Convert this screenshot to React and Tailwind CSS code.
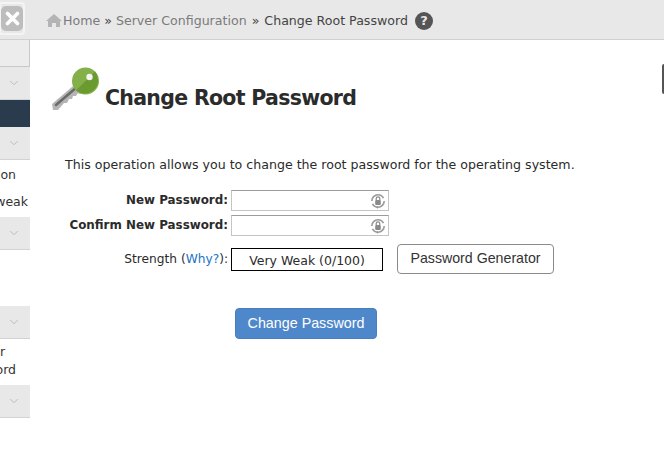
import { ChevronDown } from "lucide-react";

const font = "font-['DejaVu_Sans',sans-serif]";

const GrayRow = ({ className = "" }) => (
  <div className={`h-[33px] bg-[#e8e8e8] border-b border-[#d2d2d2] flex items-center justify-end pr-[9px] ${className}`}>
    <ChevronDown size={14} strokeWidth={1.5} className="text-[#b4b4b4]" />
  </div>
);

const KeyIcon = () => (
  <svg width="48" height="45" viewBox="0 0 48 45">
    <path d="M1 37 L28 14 L35 22 L29 27 L27 26 L25 29 L22 29 L21 32 L18 32 L16 36 L13 36 L7 43 L2 43 Z" fill="#b5b5b5" />
    <path d="M5 38 L26 20" stroke="#6a6a6a" strokeWidth="2.5" strokeLinecap="round" />
    <circle cx="34.5" cy="14" r="13.5" fill="#84b04a" />
    <path d="M44 4.5 A13.5 13.5 0 0 1 25 23.5 Z" fill="#6a9a30" />
    <circle cx="38.5" cy="10" r="3.2" fill="#f4f4f0" />
  </svg>
);

const LockIcon = () => (
  <svg width="16" height="17" viewBox="0 0 16 17" className="absolute right-[2px] top-[2px]">
    <circle cx="8" cy="8" r="6.2" fill="none" stroke="#9a9a9a" strokeWidth="1.6" strokeDasharray="16 3" />
    <rect x="5.2" y="7" width="5.6" height="5" rx="1" fill="#8a8a8a" />
    <path d="M6.2 7 V5.6 a1.8 1.8 0 0 1 3.6 0 V7" fill="none" stroke="#8a8a8a" strokeWidth="1.2" />
    <path d="M6 14 l2 2 v-3 z" fill="#9a9a9a" />
  </svg>
);

const PasswordInput = () => (
  <div className="relative w-[158px] h-[21px] bg-white border border-[#c4c4c4] border-t-[#9c9c9c]">
    <LockIcon />
  </div>
);

export default function App() {
  return (
    <div className={`w-[664px] h-[464px] bg-white overflow-hidden relative text-[#2b2b2b] ${font}`}>
      <header className="h-[40px] bg-[#e8e8e8] border-b border-[#d0d0d0] flex items-center text-[12.6px]">
        <div className="w-[26px] h-[33px] -ml-[1px] mt-[-3px] border-2 border-[#f4f4f4] rounded-r-[4px] flex items-center justify-center">
          <div className="w-[22px] h-[25px] bg-[#bdbdbd] rounded-[5px] flex items-center justify-center">
            <svg width="15" height="15" viewBox="0 0 15 15">
              <path d="M2.5 2.5 L12.5 12.5 M12.5 2.5 L2.5 12.5" stroke="#fff" strokeWidth="3.6" strokeLinecap="round" />
            </svg>
          </div>
        </div>
        <svg width="16" height="13" viewBox="0 0 16 13" className="ml-[21px] mr-[1px] mt-[1px]">
          <path d="M8 0 L16 7 H14 V13 H10 V9 H6 V13 H2 V7 H0 Z" fill="#b4b4b4" />
        </svg>
        <div className="flex items-center mt-[3px]">
          <span className="text-[#7b7b7b]">Home</span>
          <span className="mx-[4px] text-[#444]">»</span>
          <span className="text-[#7b7b7b]">Server Configuration</span>
          <span className="mx-[5px] text-[#444]">»</span>
          <span className="text-[#444]">Change Root Password</span>
          <span className="ml-[7px] w-[18px] h-[18px] rounded-full bg-[#555] text-[#e8e8e8] font-bold text-[13px] flex items-center justify-center">?</span>
        </div>
      </header>

      <div className="flex">
        <aside className="w-[30px] shrink-0 overflow-hidden text-[12.5px] text-[#333]">
          <div className="h-[27px] bg-[#ececec] border-b border-r border-[#c8c8c8]" />
          <GrayRow />
          <div className="h-[27px] bg-[#2b3b4e]" />
          <GrayRow />
          <div className="h-[57px] relative">
            <span className="absolute right-[14px] top-[6px]">on</span>
            <span className="absolute right-[2px] top-[33px]">weak</span>
          </div>
          <GrayRow />
          <div className="h-[56px]" />
          <GrayRow />
          <div className="h-[46px] relative">
            <span className="absolute left-0 top-[4px]">r</span>
            <span className="absolute right-[14px] top-[22px]">ord</span>
          </div>
          <GrayRow />
        </aside>

        <main className="flex-1 pl-[21px]">
          <div className="flex items-end gap-[6px] mt-[27px]">
            <KeyIcon />
            <h1 className="text-[20.5px] tracking-[-0.7px] font-bold leading-none mb-[4px]">Change Root Password</h1>
          </div>
          <p className="ml-[14px] mt-[45px] text-[12.6px] leading-[16px]">This operation allows you to change the root password for the operating system.</p>

          <div className="mt-[15px] flex items-center h-[25px]">
            <span className="w-[180px] text-right text-[11.9px] font-bold pr-[3px]">New Password:</span>
            <PasswordInput />
          </div>
          <div className="flex items-center h-[25px]">
            <span className="w-[180px] text-right text-[11.9px] font-bold pr-[3px]">Confirm New Password:</span>
            <PasswordInput />
          </div>
          <div className="flex items-center mt-[6px]">
            <span className="w-[180px] text-right text-[12.2px] pr-[3px]">
              Strength (<span className="text-[#1a73c8]">Why?</span>):
            </span>
            <div className="w-[152px] h-[23px] border border-black text-center text-[12.5px] leading-[23px]">Very Weak (0/100)</div>
            <button className="ml-[14px] w-[157px] h-[30px] bg-white border border-[#8a8a8a] rounded-[4px] text-[14.2px] text-[#333] font-['Liberation_Sans',sans-serif]">Password Generator</button>
          </div>

          <button className="block ml-[184px] mt-[34px] w-[142px] h-[31px] bg-[#4f88ca] border border-[#4a7fbd] rounded-[4px] text-white text-[14.3px] font-['Liberation_Sans',sans-serif]">Change Password</button>
        </main>
      </div>

      <div className="absolute right-0 top-[64px] w-[2px] h-[30px] bg-[#555] rounded-l-[2px]" />
    </div>
  );
}
